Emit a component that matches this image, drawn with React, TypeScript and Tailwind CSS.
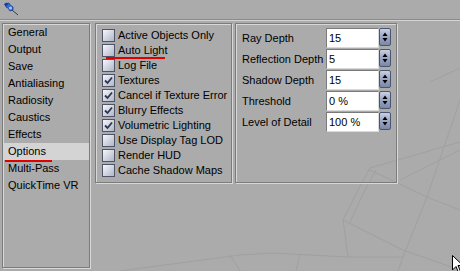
import React from "react";

const SECTIONS = [
  "General",
  "Output",
  "Save",
  "Antialiasing",
  "Radiosity",
  "Caustics",
  "Effects",
  "Options",
  "Multi-Pass",
  "QuickTime VR",
];

const OPTIONS = [
  { label: "Active Objects Only", checked: false },
  { label: "Auto Light", checked: false, marked: true },
  { label: "Log File", checked: false },
  { label: "Textures", checked: true },
  { label: "Cancel if Texture Error", checked: true },
  { label: "Blurry Effects", checked: true },
  { label: "Volumetric Lighting", checked: true },
  { label: "Use Display Tag LOD", checked: false },
  { label: "Render HUD", checked: false },
  { label: "Cache Shadow Maps", checked: false },
];

const VALUES = [
  { label: "Ray Depth", value: "15" },
  { label: "Reflection Depth", value: "5" },
  { label: "Shadow Depth", value: "15" },
  { label: "Threshold", value: "0 %" },
  { label: "Level of Detail", value: "100 %" },
];

function Pin() {
  return (
    <svg width="16" height="14" viewBox="0 0 16 14">
      <line x1="9" y1="8" x2="15" y2="13" stroke="#3a3a4a" strokeWidth="1" />
      <path d="M2 2 L6 1 L7 3 L10 5 L10 8 L7 9 L5 6 L3 5 Z" fill="#2f6fe0" stroke="#1a3a90" strokeWidth="0.8" />
      <circle cx="7.5" cy="6" r="1.6" fill="#9cc4ff" />
      <path d="M1 2 L4 0.5 L5 3 L2.5 4 Z" fill="#1a3a90" />
    </svg>
  );
}

function Checkbox({ checked }: { checked: boolean }) {
  return (
    <div className="w-[13px] h-[13px] border border-[#4f5466] bg-gradient-to-br from-[#f6f8fc] to-[#aeb6c8] flex items-center justify-center shrink-0">
      {checked && (
        <svg width="11" height="11" viewBox="0 0 11 11">
          <path d="M2 5.5 L4.5 8 L9 2.5" fill="none" stroke="#2c3450" strokeWidth="1.8" />
        </svg>
      )}
    </div>
  );
}

function Spinner() {
  return (
    <div className="w-[12px] h-[18px] rounded-[2px] border border-[#4a5670] bg-gradient-to-b from-[#c8d0e2] via-[#9aa6c2] to-[#7a88a8] flex items-center justify-center">
      <svg width="6" height="10" viewBox="0 0 6 10">
        <path d="M3 0.5 L5.5 4 L0.5 4 Z" fill="#000" />
        <path d="M0.5 6 L5.5 6 L3 9.5 Z" fill="#000" />
      </svg>
    </div>
  );
}

export default function App() {
  return (
    <div className="relative w-[460px] h-[271px] overflow-hidden bg-[#ababab] text-[11px] leading-none text-black font-['Liberation_Sans',Arial,sans-serif]">
      {/* viewport wireframe behind the dialog */}
      <svg className="absolute inset-0" width="460" height="271" viewBox="0 0 460 271">
        <g fill="none" stroke="#a0a0a0" strokeWidth="1">
          <path d="M460 142 L370 168 L358 190 L343 220 L348 257" />
          <path d="M376 170 L364 192 L350 222" />
          <path d="M343 220 L403 250 L460 270" />
          <path d="M370 170 L427 197 L460 210" />
          <path d="M427 197 L403 257 L398 271" />
          <path d="M460 100 L427 197" />
          <path d="M400 180 L460 150" />
          <path d="M430 82 L460 68" />
          <path d="M120 271 L240 255 L273 253 L347 257 L403 257" />
          <path d="M230 255 L240 271" />
          <path d="M300 254 L296 271" />
        </g>
      </svg>

      <div className="relative flex flex-col h-full">
        <div className="h-[20px] shrink-0 border-b border-[#8a8a8a] shadow-[0_1px_0_#d4d4d4] pl-[3px] pt-[2px]">
          <Pin />
        </div>

        <div className="flex items-start pt-[3px] pl-[2px]">
          <div className="w-[88px] h-[245px] border border-[#7c7c7c] shadow-[inset_1px_1px_0_#d8d8d8,1px_1px_0_#d8d8d8]">
            {SECTIONS.map((s) => (
              <div
                key={s}
                className={
                  "relative h-[17px] pl-[5px] flex items-center " +
                  (s === "Options" ? "bg-[#d4d4d4]" : "")
                }
              >
                {s}
                {s === "Options" && (
                  <div className="absolute left-[2px] top-[17px] w-[47px] h-[2px] bg-[#e00000]" />
                )}
              </div>
            ))}
          </div>

          <div className="ml-[5px] w-[137px] h-[160px] border border-[#7c7c7c] shadow-[inset_1px_1px_0_#d8d8d8,1px_1px_0_#d8d8d8] pt-[4px] pl-[6px]">
            {OPTIONS.map((o) => (
              <div key={o.label} className="relative h-[15px] flex items-center gap-[3px] whitespace-nowrap">
                <Checkbox checked={o.checked} />
                <span>{o.label}</span>
                {o.marked && (
                  <div className="absolute left-[4px] top-[14px] w-[59px] h-[2px] bg-[#e00000]" />
                )}
              </div>
            ))}
          </div>

          <div className="ml-[3px] w-[162px] h-[160px] border border-[#7c7c7c] shadow-[inset_1px_1px_0_#d8d8d8,1px_1px_0_#d8d8d8] pt-[4px] pl-[6px]">
            {VALUES.map((v) => (
              <div key={v.label} className="h-[21px] flex items-start">
                <div className="w-[84px] h-[20px] flex items-center whitespace-nowrap">{v.label}</div>
                <div className="w-[53px] h-[20px] bg-white border-t border-l border-[#7a7a7a] border-b border-r border-b-[#dadada] border-r-[#dadada] flex items-center pl-[2px]">
                  {v.value}
                </div>
                <Spinner />
              </div>
            ))}
          </div>
        </div>
      </div>

      {/* mouse pointer */}
      <svg className="absolute left-[452px] top-[255px]" width="12" height="19" viewBox="0 0 12 19">
        <path d="M0.5 0.5 L0.5 15 L4 11.5 L6.5 17.5 L8.5 16.5 L6 10.5 L11 10.5 Z" fill="#fff" stroke="#000" strokeWidth="1" />
      </svg>
    </div>
  );
}
